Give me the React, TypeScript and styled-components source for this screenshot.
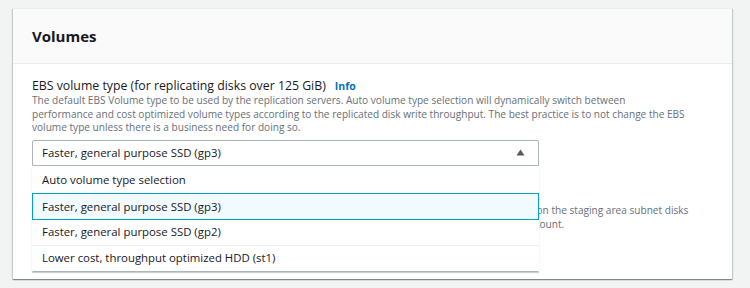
import styled, { createGlobalStyle } from 'styled-components';

const GlobalStyle = createGlobalStyle`
  html, body {
    margin: 0;
    padding: 0;
    background: #f2f3f3;
    font-family: "Open Sans", "Liberation Sans", sans-serif;
    color: #16191f;
  }
  * { box-sizing: border-box; }
`;

const Page = styled.div`
  width: 750px;
  height: 288px;
  padding: 8px 18px 0 13px;
  overflow: hidden;
`;

const Card = styled.section`
  background: #fff;
  border-top: 1px solid #eaeded;
  box-shadow: 0 1px 1px 0 rgba(0, 28, 36, 0.3), 1px 1px 1px 0 rgba(0, 28, 36, 0.15),
    -1px 1px 1px 0 rgba(0, 28, 36, 0.15);
`;

const Header = styled.header`
  background: #fafafa;
  border-bottom: 1px solid #eaeded;
  padding: 16px 19px;
`;

const Title = styled.h2`
  margin: 0;
  font-size: 15px;
  line-height: 22px;
  font-weight: 700;
  color: #16191f;
`;

const Body = styled.div`
  padding: 14px 19px 16px 19px;
`;

const Field = styled.div<{ $gap?: number }>`
  display: flex;
  flex-direction: column;
  margin-top: ${(p) => p.$gap ?? 0}px;
`;

const Label = styled.div`
  font-size: 12.3px;
  line-height: 16px;
  color: #16191f;
  display: flex;
  align-items: baseline;
  gap: 9px;
`;

const InfoLink = styled.a`
  font-size: 10.5px;
  font-weight: 700;
  color: #0073bb;
  text-decoration: none;
`;

const Description = styled.p<{ $lh?: number }>`
  margin: 0;
  font-size: 10.1px;
  line-height: ${(p) => p.$lh ?? 13.5}px;
  color: #687078;
  white-space: nowrap;
`;

const SelectWrap = styled.div<{ $gap?: number }>`
  position: relative;
  width: 507px;
  margin-top: ${(p) => p.$gap ?? 0}px;
`;

const SelectBox = styled.div<{ $open?: boolean }>`
  height: 26px;
  border: 1px solid #aab7b8;
  border-radius: ${(p) => (p.$open ? '2px 2px 0 0' : '2px')};
  background: #fff;
  display: flex;
  align-items: center;
  justify-content: space-between;
  padding: 0 13px 0 9px;
  font-size: 11.4px;
  color: #16191f;
`;

const Caret = styled.svg`
  width: 9px;
  height: 7px;
`;

const Menu = styled.ul`
  position: absolute;
  top: 26px;
  left: 0;
  right: 0;
  margin: 0;
  padding: 0;
  list-style: none;
  background: #fff;
  border: 1px solid #eaeded;
  border-top: none;
  border-bottom: 1px solid #aab7b8;
  box-shadow: 0 1px 1px 0 rgba(0, 28, 36, 0.2);
  z-index: 2;
`;

const Option = styled.li<{ $highlighted?: boolean }>`
  position: relative;
  height: ${(p) => (p.$highlighted ? 27 : 26)}px;
  margin: 0 -1px ${(p) => (p.$highlighted ? -1 : 0)}px;
  display: flex;
  align-items: center;
  padding: 0 9px;
  font-size: 11.4px;
  color: #16191f;
  background: ${(p) => (p.$highlighted ? '#f1faff' : '#fff')};
  border: 1px solid ${(p) => (p.$highlighted ? '#00a1c9' : 'transparent')};
  border-top-color: ${(p) => (p.$highlighted ? '#00a1c9' : '#eaeded')};
  z-index: ${(p) => (p.$highlighted ? 1 : 0)};
  &:first-child {
    height: 27px;
    border-top-color: transparent;
  }
`;

const options = [
  'Auto volume type selection',
  'Faster, general purpose SSD (gp3)',
  'Faster, general purpose SSD (gp2)',
  'Lower cost, throughput optimized HDD (st1)',
];

export default function App() {
  return (
    <Page>
      <GlobalStyle />
      <Card>
        <Header>
          <Title>Volumes</Title>
        </Header>
        <Body>
          <Field>
            <Label>
              EBS volume type (for replicating disks over 125 GiB)
              <InfoLink href="#">Info</InfoLink>
            </Label>
            <Description>
              The default EBS Volume type to be used by the replication servers. Auto volume type
              selection will dynamically switch between
              <br />
              performance and cost optimized volume types according to the replicated disk write
              throughput. The best practice is to not change the EBS
              <br />
              volume type unless there is a business need for doing so.
            </Description>
            <SelectWrap $gap={5}>
              <SelectBox $open>
                <span>Faster, general purpose SSD (gp3)</span>
                <Caret viewBox="0 0 9 7">
                  <path d="M4.5 0.5 L8.5 6.5 L0.5 6.5 Z" fill="#545b64" />
                </Caret>
              </SelectBox>
              <Menu>
                {options.map((o, i) => (
                  <Option key={o} $highlighted={i === 1}>
                    {o}
                  </Option>
                ))}
              </Menu>
            </SelectWrap>
          </Field>
          <Field $gap={21}>
            <Label>EBS encryption</Label>
            <Description $lh={14}>
              Select whether to use the default EBS encryption key, or a custom key to encrypt the
              replicated data stored on the staging area subnet disks
              <br />
              and on the replication servers. Custom keys must be created in advance in the KMS
              console of your AWS account.
            </Description>
            <SelectWrap $gap={6}>
              <SelectBox>
                <span>Default</span>
                <Caret viewBox="0 0 9 7">
                  <path d="M0.5 0.5 L8.5 0.5 L4.5 6.5 Z" fill="#545b64" />
                </Caret>
              </SelectBox>
            </SelectWrap>
          </Field>
        </Body>
      </Card>
    </Page>
  );
}
